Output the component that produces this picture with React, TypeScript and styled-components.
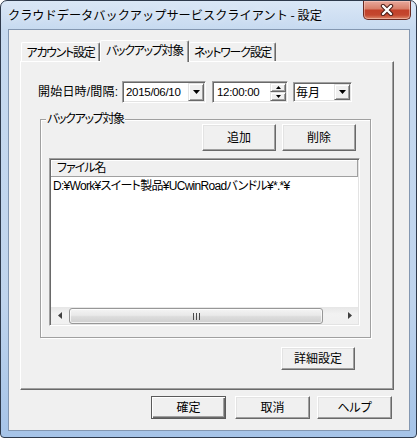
import React from "react";
import styled, { createGlobalStyle, css } from "styled-components";

const Global = createGlobalStyle`
  html, body { margin: 0; padding: 0; background: #ffffff; }
  body {
    font-family: "Liberation Sans", "Noto Sans CJK JP", sans-serif;
    font-size: 12px;
    color: #000;
  }
  * { box-sizing: border-box; }
`;

const raised = css`
  background: #f0f0f0;
  border: 1px solid;
  border-color: #ffffff #696969 #696969 #ffffff;
  box-shadow: inset -1px -1px #a0a0a0, inset 1px 1px #e3e3e3;
`;

const sunken = css`
  border: 1px solid;
  border-color: #a0a0a0 #ffffff #ffffff #a0a0a0;
  box-shadow: inset 1px 1px #696969, inset -1px -1px #e3e3e3;
`;

const Window = styled.div`
  width: 417px;
  height: 438px;
  border: 1px solid #2e3a4c;
  border-radius: 7px 7px 4px 4px;
  background: linear-gradient(
    to bottom,
    #dae7f6 0px,
    #c7daf0 28px,
    #bfd4ed 300px,
    #a6c4e8 100%
  );
  display: flex;
  flex-direction: column;
  overflow: hidden;
`;

const TitleBar = styled.div`
  height: 28px;
  display: flex;
  align-items: flex-start;
`;

const Title = styled.div`
  font-family: "Noto Sans CJK JP", sans-serif;
  font-size: 12.2px;
  line-height: 28px;
  padding-left: 7px;
  white-space: nowrap;
  text-shadow: 0 0 6px rgba(255, 255, 255, 0.8);
`;

const CloseButton = styled.div`
  margin-left: auto;
  margin-right: 5px;
  width: 48px;
  height: 19px;
  border: 1px solid #6a2a22;
  border-top: none;
  border-radius: 0 0 5px 5px;
  background: linear-gradient(
    to bottom,
    #e8a99c 0%,
    #d9806b 42%,
    #c2412a 52%,
    #c4472f 78%,
    #dd8a6c 100%
  );
  box-shadow: inset 0 0 0 1px rgba(255, 220, 210, 0.45);
  display: flex;
  align-items: center;
  justify-content: center;
`;

const Client = styled.div`
  flex: 1;
  margin: 0 6px 6px 7px;
  background: #f0f0f0;
  border: 1px solid #8397b1;
  padding-top: 10px;
  display: flex;
  flex-direction: column;
  font-feature-settings: "palt";
`;

const TabStrip = styled.div`
  height: 21px;
  margin: 0 15px 0 11px;
  padding-left: 1px;
  display: flex;
  align-items: flex-end;
`;

const Tab = styled.div<{ $active?: boolean; $w: number }>`
  position: relative;
  z-index: ${(p) => (p.$active ? 1 : 0)};
  width: ${(p) => p.$w}px;
  height: ${(p) => (p.$active ? 22 : 19)}px;
  margin-bottom: ${(p) => (p.$active ? -1 : 0)}px;
  padding: ${(p) => (p.$active ? "0 0 2px" : "2px 0 0")};
  background: #f0f0f0;
  border-top: 1px solid #ffffff;
  border-left: 1px solid #ffffff;
  border-right: 1px solid #696969;
  box-shadow: inset -1px 0 #a0a0a0;
  border-radius: 2px 2px 0 0;
  display: flex;
  align-items: center;
  justify-content: center;
  white-space: nowrap;
  line-height: 1;
  letter-spacing: -1.3px;
`;

const Panel = styled.div`
  margin: 0 15px 0 11px;
  border: 1px solid;
  border-color: #ffffff #696969 #696969 #ffffff;
  box-shadow: inset -1px -1px #a0a0a0;
  padding: 19px 22px 19px 17px;
  display: flex;
  flex-direction: column;
`;

const ScheduleRow = styled.div`
  height: 22px;
  display: flex;
  align-items: center;
`;

const FieldLabel = styled.div`
  width: 84px;
  white-space: nowrap;
  line-height: 1;
  letter-spacing: 0.2px;
`;

const Combo = styled.div<{ $w: number; $h: number; $ml?: number }>`
  ${sunken};
  width: ${(p) => p.$w}px;
  height: ${(p) => p.$h}px;
  margin-left: ${(p) => p.$ml ?? 0}px;
  background: #ffffff;
  padding: 1px;
  display: flex;
  align-items: stretch;
`;

const ComboText = styled.div<{ $pl?: number }>`
  flex: 1;
  display: flex;
  align-items: center;
  padding-left: ${(p) => p.$pl ?? 2}px;
  padding-top: 1px;
  line-height: 1;
  white-space: nowrap;
`;

const Digits = styled.span`
  font-size: 11.5px;
  letter-spacing: -0.3px;
`;

const DropButton = styled.div`
  width: 16px;
  background: #f0f0f0;
  border: 1px solid;
  border-color: #e3e3e3 #696969 #696969 #e3e3e3;
  box-shadow: inset 1px 1px #ffffff, inset -1px -1px #a0a0a0;
  display: flex;
  align-items: center;
  justify-content: center;
`;

const SpinColumn = styled.div`
  width: 16px;
  display: flex;
  flex-direction: column;
`;

const SpinButton = styled.div`
  flex: 1;
  background: #f0f0f0;
  border: 1px solid;
  border-color: #e3e3e3 #696969 #696969 #e3e3e3;
  box-shadow: inset 1px 1px #ffffff, inset -1px -1px #a0a0a0;
  display: flex;
  align-items: center;
  justify-content: center;
`;

const Group = styled.div`
  position: relative;
  margin: 16px 0 0 2px;
  height: 219px;
  border: 1px solid #a0a0a0;
  box-shadow: inset 1px 1px #ffffff, 1px 1px 0 #ffffff;
  padding: 4px 12px 11px 8px;
  display: flex;
  flex-direction: column;
`;

const Legend = styled.div`
  position: absolute;
  top: -8px;
  left: 5px;
  padding: 0 1px;
  background: #f0f0f0;
  line-height: 14px;
  white-space: nowrap;
  letter-spacing: -1.3px;
`;

const ButtonRow = styled.div<{ $mt?: number; $mr?: number; $gap: number }>`
  display: flex;
  justify-content: flex-end;
  gap: ${(p) => p.$gap}px;
  margin-top: ${(p) => p.$mt ?? 0}px;
  margin-right: ${(p) => p.$mr ?? 0}px;
`;

const Button = styled.div<{ $w: number; $h: number; $default?: boolean; $mr?: number }>`
  ${raised};
  width: ${(p) => p.$w}px;
  height: ${(p) => p.$h}px;
  margin-right: ${(p) => p.$mr ?? 0}px;
  display: flex;
  align-items: center;
  justify-content: center;
  line-height: 1;
  white-space: nowrap;
  ${(p) =>
    p.$default &&
    css`
      border: 1px solid #5a5a5a;
      box-shadow: inset 1px 1px #ffffff, inset -1px -1px #696969,
        inset -2px -2px #a0a0a0;
    `}
`;

const ListBox = styled.div`
  ${sunken};
  margin-top: 7px;
  margin-right: -2px;
  height: 168px;
  background: #ffffff;
  padding: 1px;
  display: flex;
  flex-direction: column;
`;

const ListHeader = styled.div`
  height: 17px;
  background: #f0f0f0;
  border-right: 1px solid #a0a0a0;
  border-bottom: 1px solid #a0a0a0;
  box-shadow: inset 1px 1px #ffffff;
  padding-left: 6px;
  display: flex;
  align-items: center;
  line-height: 1;
  letter-spacing: -1px;
`;

const ListBody = styled.div`
  flex: 1;
  padding-top: 1px;
`;

const ListRow = styled.div`
  height: 16px;
  padding-left: 2px;
  display: flex;
  align-items: center;
  line-height: 1;
  white-space: nowrap;
  letter-spacing: -0.7px;
`;

const HScroll = styled.div`
  height: 17px;
  display: flex;
  background: linear-gradient(to bottom, #e6e6e6, #f2f2f2 40%, #f0f0f0);
`;

const ScrollArrow = styled.div`
  width: 17px;
  display: flex;
  align-items: center;
  justify-content: center;
`;

const ScrollTrack = styled.div`
  flex: 1;
  display: flex;
  align-items: stretch;
  padding: 1px 0 0 1px;
`;

const Thumb = styled.div<{ $w: number }>`
  width: ${(p) => p.$w}px;
  border: 1px solid #979797;
  border-radius: 3px;
  background: linear-gradient(
    to bottom,
    #f4f4f4 0%,
    #e9e9e9 45%,
    #dcdcdc 55%,
    #cfcfcf 100%
  );
  box-shadow: inset 0 0 0 1px rgba(255, 255, 255, 0.7);
  display: flex;
  align-items: center;
  justify-content: center;
`;

const DialogFooter = styled.div`
  margin-top: 6px;
  padding-right: 17px;
  display: flex;
  justify-content: flex-end;
  gap: 7px;
`;

const DownArrow = () => (
  <svg width="7" height="4" viewBox="0 0 7 4">
    <polygon points="0,0 7,0 3.5,4" fill="#000" />
  </svg>
);

const SpinArrow = ({ up }: { up?: boolean }) => (
  <svg width="5" height="3" viewBox="0 0 5 3">
    <polygon points={up ? "0,3 5,3 2.5,0" : "0,0 5,0 2.5,3"} fill="#000" />
  </svg>
);

const SideArrow = ({ right }: { right?: boolean }) => (
  <svg width="4" height="7" viewBox="0 0 4 7">
    <polygon points={right ? "0,0 4,3.5 0,7" : "4,0 0,3.5 4,7"} fill="#404040" />
  </svg>
);

const Grip = () => (
  <svg width="7" height="7" viewBox="0 0 7 7">
    <rect x="0" y="0" width="1" height="7" fill="#4a4a4a" />
    <rect x="3" y="0" width="1" height="7" fill="#4a4a4a" />
    <rect x="6" y="0" width="1" height="7" fill="#4a4a4a" />
  </svg>
);

const CloseGlyph = () => (
  <svg width="14" height="12" viewBox="0 0 14 12">
    <path d="M3 2 L11 10 M11 2 L3 10" stroke="#4a1e18" strokeWidth="4.4" strokeLinecap="round" />
    <path d="M3 2 L11 10 M11 2 L3 10" stroke="#ffffff" strokeWidth="2.4" strokeLinecap="round" />
  </svg>
);

const tabs = [
  { label: "アカウント設定", w: 79 },
  { label: "バックアップ対象", w: 89, active: true },
  { label: "ネットワーク設定", w: 87 },
];

export default function App() {
  return (
    <>
      <Global />
      <Window>
        <TitleBar>
          <Title>クラウドデータバックアップサービスクライアント - 設定</Title>
          <CloseButton>
            <CloseGlyph />
          </CloseButton>
        </TitleBar>
        <Client>
          <TabStrip>
            {tabs.map((t) => (
              <Tab key={t.label} $w={t.w} $active={t.active}>
                {t.label}
              </Tab>
            ))}
          </TabStrip>
          <Panel>
            <ScheduleRow>
              <FieldLabel>開始日時/間隔:</FieldLabel>
              <Combo $w={84} $h={22}>
                <ComboText>
                  <Digits>2015/06/10</Digits>
                </ComboText>
                <DropButton>
                  <DownArrow />
                </DropButton>
              </Combo>
              <Combo $w={76} $h={22} $ml={6}>
                <ComboText $pl={3}>
                  <Digits>12:00:00</Digits>
                </ComboText>
                <SpinColumn>
                  <SpinButton>
                    <SpinArrow up />
                  </SpinButton>
                  <SpinButton>
                    <SpinArrow />
                  </SpinButton>
                </SpinColumn>
              </Combo>
              <Combo $w={59} $h={20} $ml={5}>
                <ComboText $pl={1}>毎月</ComboText>
                <DropButton>
                  <DownArrow />
                </DropButton>
              </Combo>
            </ScheduleRow>
            <Group>
              <Legend>バックアップ対象</Legend>
              <ButtonRow $gap={6} $mr={2}>
                <Button $w={74} $h={27}>追加</Button>
                <Button $w={74} $h={27}>削除</Button>
              </ButtonRow>
              <ListBox>
                <ListHeader>ファイル名</ListHeader>
                <ListBody>
                  <ListRow>D:¥Work¥スイート製品¥UCwinRoadバンドル¥*.*¥</ListRow>
                </ListBody>
                <HScroll>
                  <ScrollArrow>
                    <SideArrow />
                  </ScrollArrow>
                  <ScrollTrack>
                    <Thumb $w={254}>
                      <Grip />
                    </Thumb>
                  </ScrollTrack>
                  <ScrollArrow>
                    <SideArrow right />
                  </ScrollArrow>
                </HScroll>
              </ListBox>
            </Group>
            <ButtonRow $gap={0} $mt={9} $mr={16}>
              <Button $w={74} $h={23}>詳細設定</Button>
            </ButtonRow>
          </Panel>
          <DialogFooter>
            <Button $w={75} $h={23} $default $mr={2}>
              確定
            </Button>
            <Button $w={75} $h={23}>取消</Button>
            <Button $w={75} $h={23}>ヘルプ</Button>
          </DialogFooter>
        </Client>
      </Window>
    </>
  );
}
